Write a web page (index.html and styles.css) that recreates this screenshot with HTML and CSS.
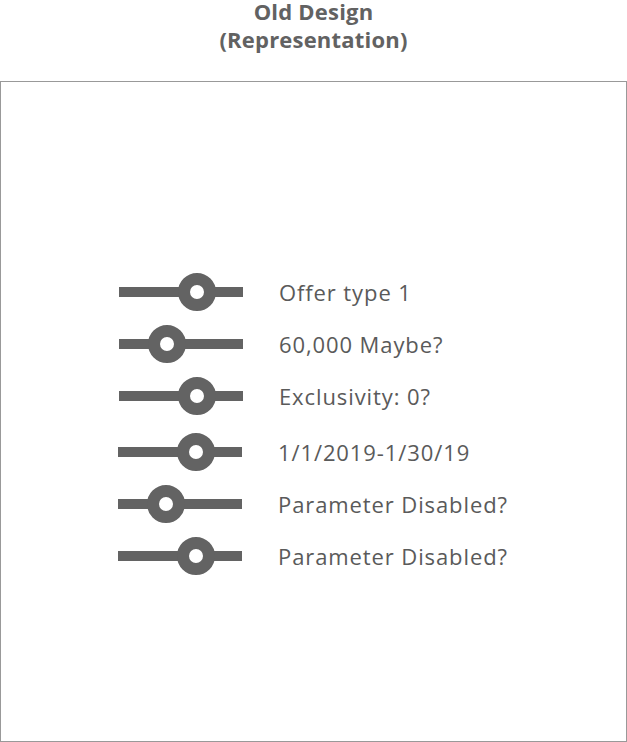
FILE: index.html
```html
<!DOCTYPE html>
<html lang="en">
<head>
  <meta charset="UTF-8">
  <meta name="viewport" content="width=device-width, initial-scale=1.0">
  <title>Old Design</title>
  <link rel="stylesheet" href="styles.css">
</head>
<body>
  <header class="title">
    <h1><span>Old Design</span><span>(Representation)</span></h1>
  </header>

  <main class="frame">
    <ul class="params">
      <li class="param shift">
        <svg class="slider" width="124" height="40" viewBox="0 0 124 40"><rect x="0" y="15" width="124" height="10"/><circle cx="78" cy="20" r="13"/></svg>
        <span>Offer type 1</span>
      </li>
      <li class="param shift">
        <svg class="slider" width="124" height="40" viewBox="0 0 124 40"><rect x="0" y="15" width="124" height="10"/><circle cx="48" cy="20" r="13"/></svg>
        <span>60,000 Maybe?</span>
      </li>
      <li class="param shift">
        <svg class="slider" width="124" height="40" viewBox="0 0 124 40"><rect x="0" y="15" width="124" height="10"/><circle cx="78" cy="20" r="13"/></svg>
        <span>Exclusivity: 0?</span>
      </li>
      <li class="param gap">
        <svg class="slider" width="124" height="40" viewBox="0 0 124 40"><rect x="0" y="15" width="124" height="10"/><circle cx="78" cy="20" r="13"/></svg>
        <span>1/1/2019-1/30/19</span>
      </li>
      <li class="param">
        <svg class="slider" width="124" height="40" viewBox="0 0 124 40"><rect x="0" y="15" width="124" height="10"/><circle cx="48" cy="20" r="13"/></svg>
        <span>Parameter Disabled?</span>
      </li>
      <li class="param">
        <svg class="slider" width="124" height="40" viewBox="0 0 124 40"><rect x="0" y="15" width="124" height="10"/><circle cx="78" cy="20" r="13"/></svg>
        <span>Parameter Disabled?</span>
      </li>
    </ul>
  </main>
</body>
</html>
```

FILE: styles.css
```css
html, body { margin: 0; padding: 0; background: #fff; }
body { width: 627px; height: 742px; font-family: "Open Sans", sans-serif; color: #5a5a5a; }

.title { height: 81px; }
.title h1 { margin: 0; font-size: 22px; line-height: 22px; font-weight: 700; letter-spacing: 0.2px; text-align: center; color: #626262; }
.title h1 span { display: block; }
.title h1 span + span { margin-top: 6px; }

.frame { box-sizing: border-box; height: 661px; border: 1px solid #999; padding-top: 184px; }

.params { list-style: none; margin: 0; padding: 0 0 0 117px; }
.param { display: flex; align-items: center; height: 52px; font-size: 22px; letter-spacing: 0.9px; }
.param.shift { padding-left: 1px; }
.param.shift .slider { margin-right: 36px; }
.param.gap { margin-top: 4px; }

.slider { flex: none; margin-right: 36px; }
.slider rect { fill: #636363; }
.slider circle { fill: #fff; stroke: #636363; stroke-width: 12; }
```
